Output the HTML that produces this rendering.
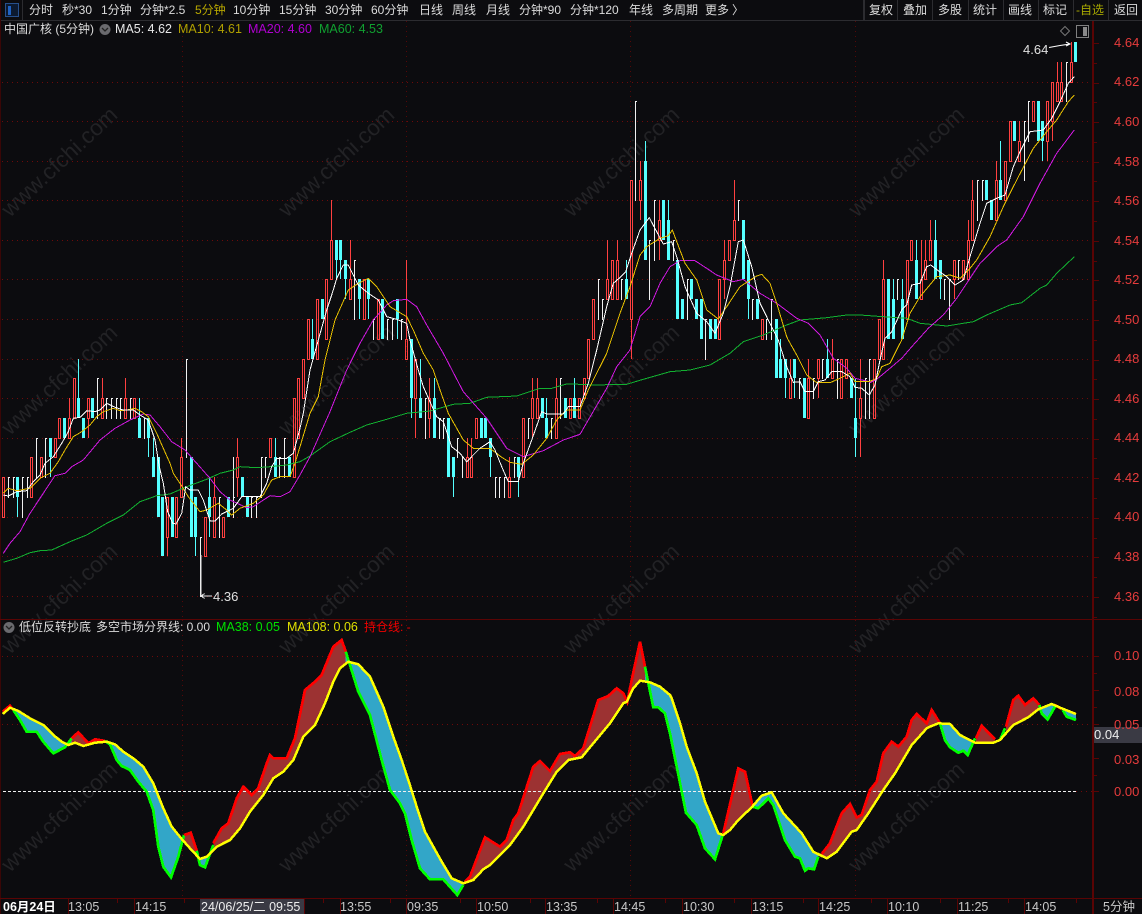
<!DOCTYPE html>
<html><head><meta charset="utf-8"><title>中国广核</title>
<style>
html,body{margin:0;padding:0;background:#0c0c0f}
#r{position:relative;width:1142px;height:914px;overflow:hidden;background:#0c0c0f;font-family:"Liberation Sans","Noto Sans CJK SC",sans-serif;font-size:12px;color:#dcdcdc}
#r svg{position:absolute;left:0;top:0}
.t{position:absolute;white-space:nowrap;line-height:14px;height:14px}
.a{color:#e63c3c;font-size:13px;left:1114px}
.b{top:900px;font-size:12.5px;color:#c8c8c8}
.m{font-size:12.5px}
</style></head><body><div id="r">
<svg id="s" width="1142" height="914" viewBox="0 0 1142 914">
<g font-family="Liberation Sans,sans-serif" font-size="22.5" fill="#222225">
<text transform="translate(10,218) rotate(-43)">www.cfchi.com</text>
<text transform="translate(287,218) rotate(-43)">www.cfchi.com</text>
<text transform="translate(572,218) rotate(-43)">www.cfchi.com</text>
<text transform="translate(857,218) rotate(-43)">www.cfchi.com</text>
<text transform="translate(10,436) rotate(-43)">www.cfchi.com</text>
<text transform="translate(287,436) rotate(-43)">www.cfchi.com</text>
<text transform="translate(572,436) rotate(-43)">www.cfchi.com</text>
<text transform="translate(857,436) rotate(-43)">www.cfchi.com</text>
<text transform="translate(10,655) rotate(-43)">www.cfchi.com</text>
<text transform="translate(287,655) rotate(-43)">www.cfchi.com</text>
<text transform="translate(572,655) rotate(-43)">www.cfchi.com</text>
<text transform="translate(857,655) rotate(-43)">www.cfchi.com</text>
<text transform="translate(10,873) rotate(-43)">www.cfchi.com</text>
<text transform="translate(287,873) rotate(-43)">www.cfchi.com</text>
<text transform="translate(572,873) rotate(-43)">www.cfchi.com</text>
<text transform="translate(857,873) rotate(-43)">www.cfchi.com</text>
</g>
<g id="g" shape-rendering="crispEdges"></g>
<g id="c" shape-rendering="crispEdges"></g>
<g id="l" fill="none" stroke-width="1" shape-rendering="crispEdges"></g>
<g id="p" fill="none" shape-rendering="crispEdges"></g>
<g id="x" shape-rendering="crispEdges">
<rect x="0" y="20" width="1142" height="1" fill="#2c2c30"/>
<rect x="0" y="0" width="1" height="914" fill="#3a0606"/>
<rect x="1092" y="21" width="2" height="877" fill="#5a0404"/>
<rect x="0" y="619" width="1142" height="1" fill="#5a0404"/>
<rect x="0" y="898" width="1142" height="1" fill="#5a0404"/>
<rect x="1092" y="898" width="2" height="16" fill="#5a0404"/>
<rect x="22" y="0" width="1" height="20" fill="#2c2c30"/>
<rect x="863" y="0" width="2" height="20" fill="#2c2c30"/>
<rect x="897" y="0" width="1" height="20" fill="#2c2c30"/>
<rect x="932" y="0" width="1" height="20" fill="#2c2c30"/>
<rect x="968" y="0" width="1" height="20" fill="#2c2c30"/>
<rect x="1003" y="0" width="1" height="20" fill="#2c2c30"/>
<rect x="1038" y="0" width="1" height="20" fill="#2c2c30"/>
<rect x="1073" y="0" width="1" height="20" fill="#2c2c30"/>
<rect x="1108" y="0" width="1" height="20" fill="#2c2c30"/>
<rect x="5.5" y="3.5" width="13" height="13" fill="#0c1a30" stroke="#27508c"/>
<rect x="8" y="6" width="3" height="9" fill="#1f62c4"/>
<rect x="1076.5" y="25.5" width="12" height="12" fill="none" stroke="#808080"/>
<rect x="1083" y="27" width="4" height="9" fill="#8a8a8a"/>
<rect x="200" y="899" width="104" height="15" fill="#3a3a44"/>
<rect x="1094" y="727" width="48" height="16" fill="#3a3a44"/>
</g>
<polygon points="1065,26.5 1069.5,31 1065,35.5 1060.5,31" fill="none" stroke="#777"/>
<path d="M1049 47.5 L1060 45.5 L1070 44 M1066 42 L1070 44 L1066 46" fill="none" stroke="#fff"/>
<path d="M201 555 V596 H212 M204.5 593.5 L201 596 L204.5 598.5" fill="none" stroke="#e8e8e8" shape-rendering="crispEdges"/>
<circle cx="105" cy="29.5" r="5.5" fill="#6a6a6e"/><path d="M102 28 L105 31 L108 28" fill="none" stroke="#222" stroke-width="1.3"/>
<circle cx="9" cy="627.5" r="5.5" fill="#6a6a6e"/><path d="M6 626 L9 629 L12 626" fill="none" stroke="#222" stroke-width="1.3"/>
</svg>

<div class="t" style="left:29px;top:3px">分时</div>
<div class="t" style="left:62px;top:3px">秒*30</div>
<div class="t" style="left:101px;top:3px">1分钟</div>
<div class="t" style="left:140px;top:3px">分钟*2.5</div>
<div class="t" style="left:195px;top:3px;color:#b8a800">5分钟</div>
<div class="t" style="left:233px;top:3px">10分钟</div>
<div class="t" style="left:279px;top:3px">15分钟</div>
<div class="t" style="left:325px;top:3px">30分钟</div>
<div class="t" style="left:371px;top:3px">60分钟</div>
<div class="t" style="left:419px;top:3px">日线</div>
<div class="t" style="left:452px;top:3px">周线</div>
<div class="t" style="left:486px;top:3px">月线</div>
<div class="t" style="left:519px;top:3px">分钟*90</div>
<div class="t" style="left:570px;top:3px">分钟*120</div>
<div class="t" style="left:629px;top:3px">年线</div>
<div class="t" style="left:662px;top:3px">多周期</div>
<div class="t" style="left:705px;top:3px">更多</div>
<div class="t" style="left:732px;top:3px">〉</div>
<div class="t" style="left:869px;top:3px">复权</div>
<div class="t" style="left:903px;top:3px">叠加</div>
<div class="t" style="left:938px;top:3px">多股</div>
<div class="t" style="left:973px;top:3px">统计</div>
<div class="t" style="left:1008px;top:3px">画线</div>
<div class="t" style="left:1043px;top:3px">标记</div>
<div class="t" style="left:1076px;top:3px;color:#a8a800">-自选</div>
<div class="t" style="left:1114px;top:3px">返回</div>

<div class="t" style="left:4px;top:22px">中国广核 (5分钟)</div>
<div class="t m" style="left:115px;top:22px;color:#e8e8e8">MA5: 4.62</div>
<div class="t m" style="left:178px;top:22px;color:#b0a000">MA10: 4.61</div>
<div class="t m" style="left:248px;top:22px;color:#b000d0">MA20: 4.60</div>
<div class="t m" style="left:319px;top:22px;color:#10a030">MA60: 4.53</div>

<div class="t" style="left:1023px;top:43px;font-size:13px;color:#e0e0e0">4.64</div>
<div class="t" style="left:213px;top:590px;font-size:13px;color:#e0e0e0">4.36</div>

<div class="t a" style="top:36px">4.64</div>
<div class="t a" style="top:75px">4.62</div>
<div class="t a" style="top:115px">4.60</div>
<div class="t a" style="top:155px">4.58</div>
<div class="t a" style="top:194px">4.56</div>
<div class="t a" style="top:234px">4.54</div>
<div class="t a" style="top:273px">4.52</div>
<div class="t a" style="top:313px">4.50</div>
<div class="t a" style="top:352px">4.48</div>
<div class="t a" style="top:392px">4.46</div>
<div class="t a" style="top:431px">4.44</div>
<div class="t a" style="top:471px">4.42</div>
<div class="t a" style="top:510px">4.40</div>
<div class="t a" style="top:550px">4.38</div>
<div class="t a" style="top:590px">4.36</div>

<div class="t" style="left:19px;top:620px">低位反转抄底</div>
<div class="t" style="left:96px;top:620px">多空市场分界线: 0.00</div>
<div class="t m" style="left:216px;top:620px;color:#00e000">MA38: 0.05</div>
<div class="t m" style="left:287px;top:620px;color:#e0e000">MA108: 0.06</div>
<div class="t" style="left:364px;top:620px;color:#f00000">持仓线: -</div>

<div class="t a" style="top:649px">0.10</div>
<div class="t a" style="top:685px">0.08</div>
<div class="t a" style="top:718px">0.05</div>
<div class="t a" style="top:753px">0.03</div>
<div class="t a" style="top:785px">0.00</div>
<div class="t" style="left:1094px;top:728px;font-size:13px;color:#eee">0.04</div>

<div class="t b" style="left:3px;color:#fff;font-weight:bold">06月24日</div>
<div class="t b" style="left:68px">13:05</div>
<div class="t b" style="left:135px">14:15</div>
<div class="t b" style="left:201px;color:#eee">24/06/25/二 09:55</div>
<div class="t b" style="left:340px">13:55</div>
<div class="t b" style="left:407px">09:35</div>
<div class="t b" style="left:477px">10:50</div>
<div class="t b" style="left:546px">13:35</div>
<div class="t b" style="left:614px">14:45</div>
<div class="t b" style="left:683px">10:30</div>
<div class="t b" style="left:752px">13:15</div>
<div class="t b" style="left:819px">14:25</div>
<div class="t b" style="left:888px">10:10</div>
<div class="t b" style="left:958px">11:25</div>
<div class="t b" style="left:1025px">14:05</div>
<div class="t b" style="left:1103px">5分钟</div>

<script>
(function(){
var Z=function(ox,oy,s){return s.trim().split(/\s+/).map(function(p){var a=p.split(',');return[ox+a[0]/3,oy+a[1]/3]})};
var J=function(fr){var o=[],L=-1e9;fr.forEach(function(f){f.forEach(function(q){if(q[0]>L){o.push(q);L=q[0]}})});return o};
var P=function(a){return a.map(function(q){return q[0].toFixed(1)+','+q[1].toFixed(1)}).join(' ')};
var h='',y=function(c){return Math.round(42+(64-c)*19.785)};
/* grid */
var g='';
for(var i=1;i<=14;i++){var Y=Math.round(42+i*39.57);g+='<line x1="2" x2="1092" y1="'+(Y+.5)+'" y2="'+(Y+.5)+'" stroke="#6e0a0a" stroke-dasharray="1 4"/>'}
[656,724].forEach(function(Y){g+='<line x1="2" x2="1092" y1="'+(Y+.5)+'" y2="'+(Y+.5)+'" stroke="#6e0a0a" stroke-dasharray="1 4"/>'});
g+='<line x1="1076" x2="1092" y1="791.5" y2="791.5" stroke="#6e0a0a" stroke-dasharray="1 4"/>';
[182,406,630,855].forEach(function(X){g+='<line x1="'+(X+.5)+'" x2="'+(X+.5)+'" y1="21" y2="619" stroke="#560808" stroke-dasharray="1 4"/><line x1="'+(X+.5)+'" x2="'+(X+.5)+'" y1="620" y2="898" stroke="#560808" stroke-dasharray="1 4"/>'});
for(i=0;i<=29;i++){var Y2=Math.round(43+i*19.785);g+='<rect x="1094" y="'+Y2+'" width="'+(i%2?3:5)+'" height="1" fill="#5a0404"/>'}
[656,673,690,707,724,741,758,775,791].forEach(function(Y,k){g+='<rect x="1094" y="'+Y+'" width="'+(k%2?3:5)+'" height="1" fill="#5a0404"/>'});
[68,134,200,304,340,406,476,545,613,682,751,818,887,957,1024].forEach(function(X){g+='<rect x="'+X+'" y="898" width="1" height="16" fill="#5a0404"/>'});
[117,184,255,323,390,460,530,597,665,734,803,871,940,1008,1076].forEach(function(X){g+='<rect x="'+X+'" y="899" width="1" height="4" fill="#5a0404"/>'});
document.getElementById('g').innerHTML=g;
/* candles */
var D="R42,40 W42,41 W42,41 C42,41,42,40 W42,40 W42,41 R43,41 W44,42 R43,42 W44,42 C44,43,44,42 R44,43 R45,44 C45,44 R45,44,46 R47,45 C46,45,48,45 C45,44 R46,45,46,44 C46,45 W47,45 R46,45,47 W46,45 W46,45 W46,45 W46,45 R46,45,47 W46,45 R46,45 C45,44,46 W45,44 C45,44,45,43 C43,42,44 C43,40 C41,38 R41,39,41,38 C41,39 R41,39 R43,41,44 W48,43 C43,39 C41,39,41,38 W39,36 R40,38 C41,40,42,39 R41,39,42 W41,39 R40,39 C41,40 W41,40,43 R43,42,44,41 C42,41 C41,40 W41,40 W41,40 W43,41 W43,42 R44,43 C43,42,44 W43,42 W44,42 C43,42 R46,42 R47,44 R48,46 R50,48 C49,48,50 R51,48 C51,50 R52,49 R54,52,56 C54,53,54,52 C54,53,54,52 C53,52,53,51 R52,51,54 W53,50 C52,51,52,50 R52,50 C52,51,52,50 W50,49 R51,49 C51,49 W50,49 W50,49 C51,50,51,49 W50,49 R49,48,53 C49,46,49,45 R48,46,48,44 C46,45,48 W46,44 R46,45,47,44 C46,44,47 W45,44 W45,44 C45,42 C43,42,43,41 W44,43 W43,42 R43,42,44 R43,42,44 R45,44 C45,44 C45,44 C44,43,44,42 W42,41 W42,41 W42,41 R42,41,43 W43,42 C43,42,43,41 R45,42 W45,44 R46,45,47,44 R46,45,47 C46,45 C45,44,46 W45,44 R46,44,47 W47,45 C46,45 R46,45 C46,45,47 R46,45 R47,46 R49,47 R51,49 W52,50 W51,50 R52,51,54 R53,51 R53,51,54 W52,51 C52,51,53 R57,50,57,48 W61,56 R57,56,58,55 C58,53,59 W54,51 W56,53 R55,54,56,53 C56,54 C55,53,56 W54,53 C53,50 C51,50 W52,50 C52,51 C51,50 C51,49 W50,48 C50,49 C50,49 R52,49 R53,52,54,51 R54,53 R55,54,57 W56,55 C55,52 C53,51,53,50 W51,50 C51,50 R50,49 W50,49 W51,49 C50,47 C48,47,49 C48,47,48,46 R47,46,48 C48,47,48,46 W47,46 C47,45 R47,45,48 W47,46 R48,47,48,46 W48,47 C48,47,49 R48,47,49 W48,46 R48,46 R48,47 C47,46 C45,44,47,43 R46,45,48,43 W47,45 W48,45 R48,45 R50,48 R52,48,53 C52,49 C51,49,52 W52,51 C51,49,52 R53,50 R54,53 C53,51,54 R52,51,54 R53,52,54 R54,53,55 C54,52,55 C53,52,53,51 W52,51 W52,50 R53,52,53,51 W53,52 R53,52 R54,52,55 R56,54,57 W57,55 W57,56 C57,56 C56,55 R57,55,58 C57,56,59 R58,56 R60,58 C60,59 R59,58,60 W60,57 W61,59 R61,60 C61,59 C60,59,60,58 R61,59,61,58 R62,60,62,59 R62,61,63 R62,61,63 W63,61 R63,62,64 C64,63";
var rc=function(x,Y,w,H,f){return '<rect x="'+x+'" y="'+Y+'" width="'+w+'" height="'+H+'" fill="'+f+'"/>'};
D.split(' ').forEach(function(t,k){
 var T=t[0],v=t.slice(1).split(',').map(Number),top=v[0],bot=v[1],hi=v.length>2?v[2]:top,lo=v.length>3?v[3]:bot;
 var cx=Math.round(3.3+k*4.681);
 var yt=y(top),yb=y(bot),yh=y(hi),yl=y(lo);
 if(T=='W'){h+=rc(cx,yh,1,yl-yh+1,'#f0f0f0')+rc(cx,yt,2,1,'#f0f0f0');return}
 var col=T=='R'?'#ff4040':'#55ffff';
 if(yh<yt)h+=rc(cx,yh,1,yt-yh,col);
 if(yl>yb)h+=rc(cx,yb,1,yl-yb,col);
 if(T=='C')h+=rc(cx-1,yt,3,yb-yt,col);
 else h+=rc(cx-1,yt,3,1,col)+rc(cx-1,yb,3,1,col)+rc(cx-1,yt,1,yb-yt,col)+rc(cx+1,yt,1,yb-yt,col);
});
document.getElementById('c').innerHTML=h;
/* MA lines */
var W=J([Z(0,360,"10,405 25,408 50,395 80,392 100,365 120,345 135,310 160,290 185,250 205,215 220,175 240,172 260,152 285,155 300,150 320,130 345,142 370,150 400,150 420,165 445,180 465,240 478,320 490,370 503,455 518,490 528,492 545,460 557,380 570,390 595,390 610,420 630,483 645,483 665,462 690,450 700,445 725,410 780,410 800,370 815,320 830,295 860,295 880,280 900,205"),
Z(280,200,"70,640 90,510 115,420 140,330 160,270 170,235 190,195 205,195 220,225 235,255 265,280 295,300 320,350 350,358 380,370 390,420 415,510 430,560 470,650 490,665 515,740 540,760 560,785 580,765 600,745 630,725 645,750 665,800 685,845 715,845 730,790 755,720 785,635 800,642 850,642 865,620 900,620"),
Z(560,90,"85,880 110,780 140,650 160,580 185,558 197,545 215,490 240,420 268,383 290,425 310,462 335,455 350,500 375,590 410,670 440,695 465,730 490,670 510,590 535,455 550,450 575,530 600,640 640,720"),
Z(770,340,"25,0 50,80 70,127 90,125 105,155 130,155 145,125 165,120 185,95 215,95 240,110 255,142 275,145 298,165"),
Z(840,60,"105,975 120,900 135,835 155,815 185,750 200,735 215,675 240,670 260,620 272,615 295,632 320,650 345,675 370,660 390,590 420,490 440,430 470,415 495,405 520,320 540,275 570,215 610,210 635,175 660,125 685,70 703,50")]);
var Yw=J([Z(0,360,"10,400 25,385 50,392 90,385 120,355 150,340 175,305 195,270 220,230 245,215 270,195 290,170 310,155 340,145 360,152 380,150 405,145 425,155 445,170 470,220 490,265 510,310 520,340 545,378 565,410 600,455 620,450 655,430 680,450 695,465 720,445 760,430 790,405 815,360 840,350 870,350 885,310 900,260"),
Z(280,200,"50,740 90,640 115,590 135,480 165,360 205,270 235,250 265,235 290,260 330,320 380,350 400,390 430,460 460,510 480,570 505,640 550,720 580,745 630,745 665,772 690,787 725,793 760,765 800,715 830,660 860,630 900,630"),
Z(560,90,"85,900 140,790 180,670 210,590 240,495 260,470 300,445 325,437 337,420 375,520 410,570 440,660 475,687 500,650 540,590 590,558 605,553 630,580 650,640 680,740"),
Z(770,340,"55,0 80,45 110,105 140,128 180,128 210,115 240,100 255,125 298,125"),
Z(840,60,"110,955 125,920 150,910 185,840 210,760 240,710 290,650 330,645 360,655 390,625 410,600 450,530 490,440 530,360 580,265 620,215 650,180 685,125 703,105")]);
var Mg=J([Z(0,360,"10,580 30,550 60,515 90,460 130,400 165,347 195,340 215,320 250,300 300,240 345,205 390,180 430,162 450,165 480,200 515,245 555,270 590,310 630,355 660,395 690,420 740,443 760,440 810,407 840,410 870,395 900,345"),
Z(280,200,"60,825 90,770 150,635 200,510 240,430 280,360 320,315 340,302 380,298 410,320 440,375 490,460 550,575 620,655 680,745 730,770 790,752 850,720 900,703"),
Z(560,90,"140,895 170,830 210,780 240,680 270,650 300,580 330,530 360,512 405,512 440,535 470,555 520,575 550,568 600,610 650,640 710,685 745,700 780,735 820,805"),
Z(770,340,"190,55 230,85 255,115 298,125"),
Z(840,60,"90,968 110,958 150,925 185,895 220,855 265,805 310,765 350,715 400,640 420,610 470,560 500,540 550,470 600,370 650,280 703,210")]);
var Gr=J([Z(0,360,"10,607 50,595 90,578 120,572 155,570 210,545 260,525 320,490 370,465 420,425 470,407 510,402 560,380 620,358 660,340 700,330 720,320 770,323 810,320 860,315 900,305"),
Z(280,200,"90,768 150,725 210,697 260,675 320,658 380,640 450,633 520,613 570,610 620,592 710,588 780,565 815,565 860,552 900,553"),
Z(560,90,"0,885 30,882 100,885 200,883 250,868 330,845 390,840 450,825 510,790 550,755 610,735 680,705 720,690 800,683 860,675 900,675"),
Z(840,60,"60,763 130,770 200,775 240,790 320,798 400,785 440,765 510,735 545,728 600,685 620,675 650,640 703,590")]);
var pl=function(a,c,w){return '<polyline points="'+P(a)+'" stroke="'+c+'" stroke-width="'+w+'"/>'};
document.getElementById('l').innerHTML=pl(Gr,'#12b030',1)+pl(Mg,'#d018e0',1)+pl(Yw,'#e8c000',1)+pl(W,'#ffffff',1);
/* lower panel */
var Ye=J([Z(0,610,"8,312 30,293 55,303 90,325 130,345 160,375 185,395 205,405 225,398 250,408 285,398 320,395 345,403 370,425 400,445"),
Z(0,760,"430,20 460,70 490,145 515,200 545,237 570,265 600,297 620,290 650,260 690,240 720,205 750,155 790,105 820,55 850,35 880,0"),
Z(0,610,"910,380 945,345 975,280 1000,215 1020,175 1045,155 1075,163 1110,200 1150,290 1180,380 1205,450"),
Z(400,630,"25,450 50,530 75,605 100,650 125,695 155,745 190,760 220,750 250,718 270,705 330,645 370,590 430,490 470,425 505,390 545,382 580,340 630,280 670,220 680,215 700,175 720,152 750,157 780,170 810,195"),
Z(660,630,"35,205 60,280 80,350 110,430 135,515 175,610 190,615 210,600 235,570 275,532 305,497 335,487 370,550 425,610 460,665 500,685 530,665 575,605 590,600 625,550 670,480 705,430 755,345 800,295 810,290"),
Z(900,610,"115,340 150,342 180,375 225,398 280,398 300,390 340,345 385,322 415,298 455,282 490,297 528,312")]);
var yAt=function(x){for(var k=1;k<Ye.length;k++){if(x<=Ye[k][0]){var a=Ye[k-1],b=Ye[k];return a[1]+(b[1]-a[1])*(x-a[0])/(b[0]-a[0])}}return Ye[Ye.length-1][1]};
var S=[
['r',Z(0,610,"8,305 30,287 40,300")],
['g',Z(0,610,"40,300 60,330 80,365 110,365 130,395 160,430 195,412 215,385")],
['r',Z(0,610,"215,385 235,367 265,400 285,388 315,393")],
['g',Z(0,610,"315,393 330,403 350,450").concat(Z(0,760,"365,18 390,30 415,65 440,95 460,150 475,260 490,320 513,352 535,290 552,225"))],
['r',Z(0,760,"552,225 572,218 590,272")],
['g',Z(0,760,"590,272 600,315 615,322 640,255")],
['r',Z(0,760,"640,250 665,205 685,190 710,115 730,80 755,105 775,85 800,10").concat(Z(0,610,"810,435 820,445 860,445 885,385 915,240 945,215 965,195 1000,110 1025,90 1037,125"))],
['g',Z(0,610,"1037,125 1050,165 1075,245 1110,315 1145,450").concat(Z(0,760,"1170,90 1200,130"),Z(400,630,"15,550 35,630 60,715 90,748 130,748 172,795 190,765"))],
['r',Z(400,630,"195,755 210,740 255,622 300,650 320,630 340,570 355,550 400,410 420,393 450,423 480,372 510,367 525,378 550,355 595,210 625,198 650,175 670,190 682,215 695,150 720,35 735,110")],
['g',Z(400,630,"735,110 760,232 775,232 795,250 810,310").concat(Z(660,630,"78,548 110,585 135,655 165,688 188,615"))],
['r',Z(660,630,"190,610 235,415 255,425 278,530")],
['g',Z(660,630,"278,530 295,535 325,505 340,525 375,630 405,680 420,685 435,722 445,715 462,718 475,680")],
['r',Z(660,630,"485,672 510,640 545,550 570,522 590,562 605,555 630,480 650,455 670,370 695,335 715,350 740,320 755,270 770,252 800,280").concat(Z(900,610,"95,300 120,340"))],
['g',Z(900,610,"120,340 135,390 150,412 175,428 190,422 203,435 225,385")],
['r',Z(900,610,"228,385 245,347 285,388")],
['g',Z(900,610,"300,390 315,355")],
['r',Z(900,610,"318,350 340,270 355,257 375,285 400,265 418,285")],
['g',Z(900,610,"418,285 425,310 443,328 465,290")],
['r',Z(900,610,"465,285 485,297")],
['g',Z(900,610,"488,300 500,320 528,330")]
];
var q='';
S.forEach(function(s){var a=s[1],x0=a[0][0],x1=a[a.length-1][0],b=[[x1,yAt(x1)]];
 for(var k=Ye.length-1;k>=0;k--){if(Ye[k][0]<x1&&Ye[k][0]>x0)b.push(Ye[k])}
 b.push([x0,yAt(x0)]);
 q+='<polygon points="'+P(a.concat(b))+'" fill="'+(s[0]=='r'?'#9c3232':'#32a6c8')+'"/>'});
q+='<line x1="3" x2="1076" y1="791.5" y2="791.5" stroke="#f0f0f0" stroke-dasharray="3 2"/>';
S.forEach(function(s){q+='<polyline points="'+P(s[1])+'" stroke="'+(s[0]=='r'?'#ff0000':'#00ff00')+'" stroke-width="2.7"/>'});
q+='<polyline points="'+P(Ye)+'" stroke="#ffff00" stroke-width="2.5"/>';
document.getElementById('p').innerHTML=q;
})();
</script>
</div></body></html>
